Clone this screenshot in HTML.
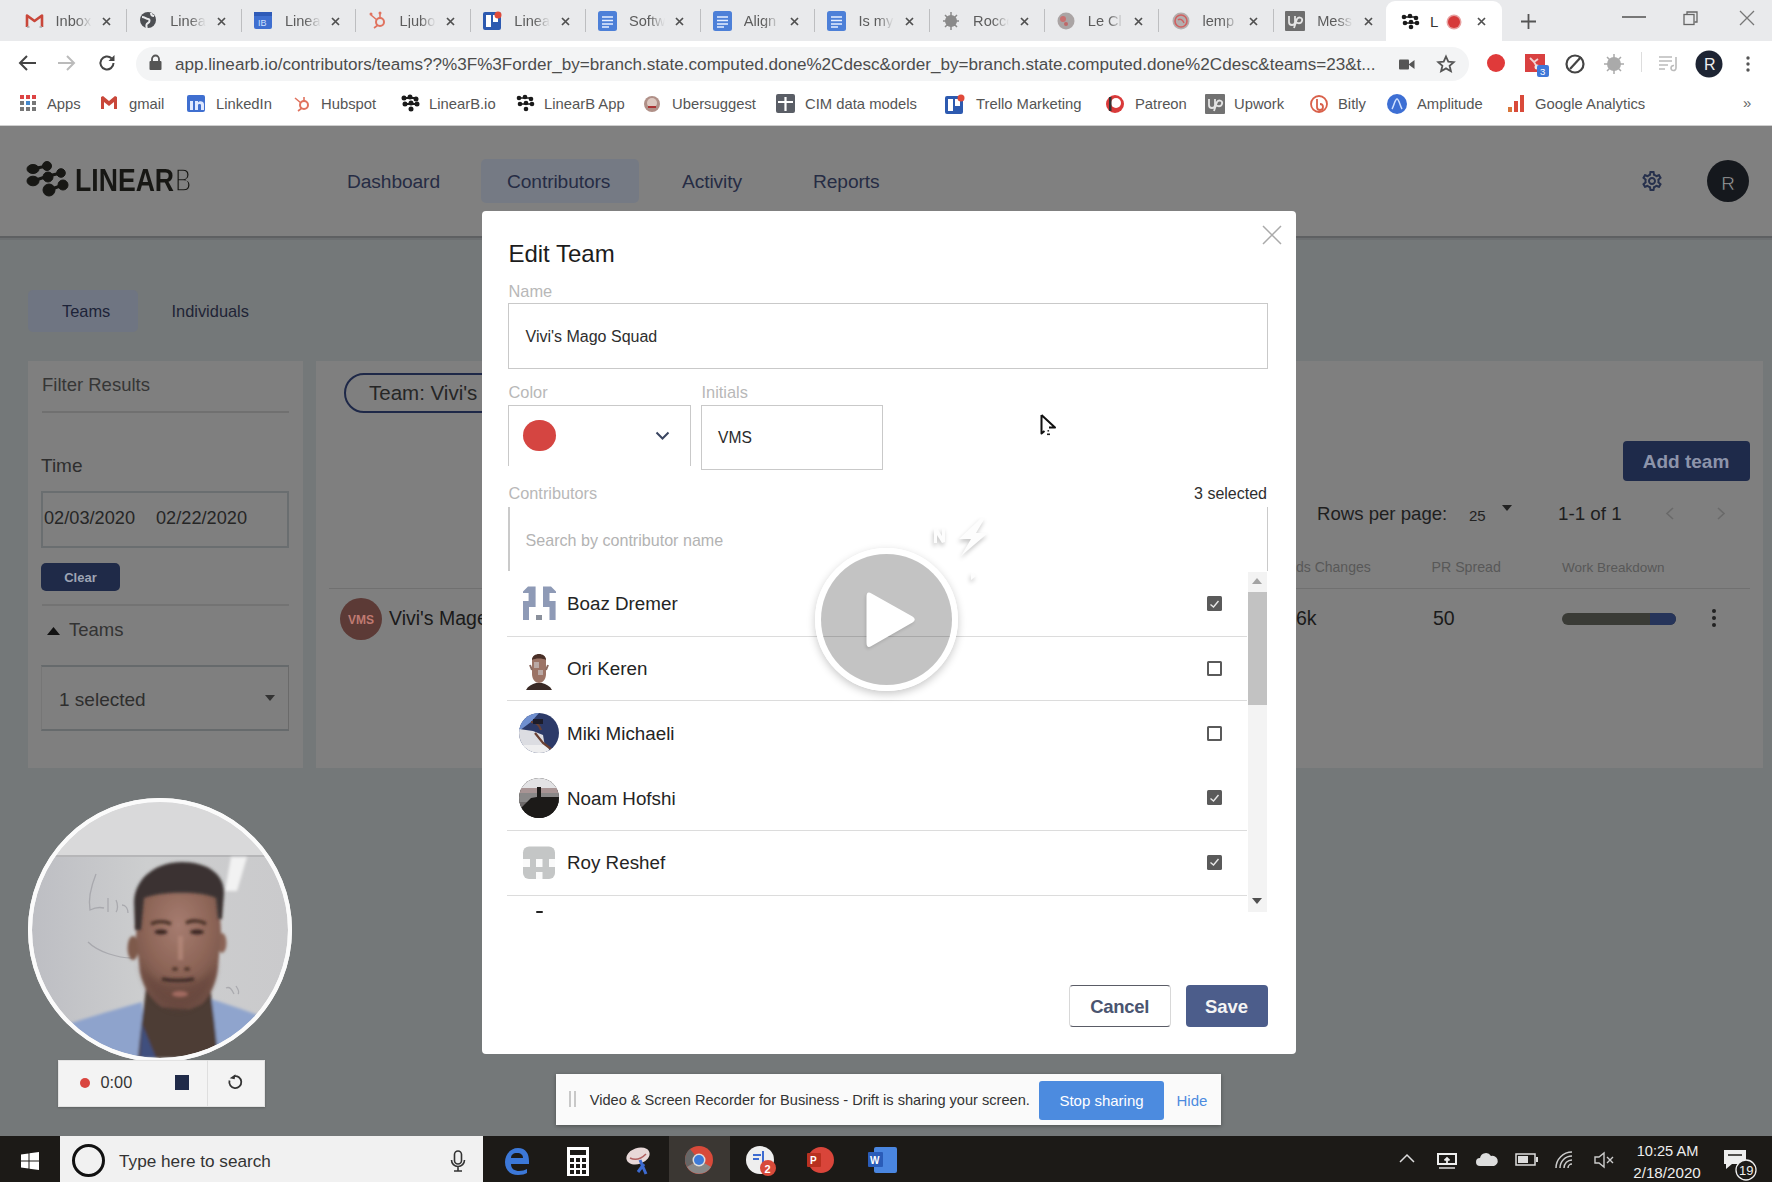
<!DOCTYPE html><html><head><meta charset="utf-8"><style>
html,body{margin:0;padding:0;width:1772px;height:1182px;overflow:hidden;background:#747879;font-family:"Liberation Sans",sans-serif;}
.a{position:absolute;box-sizing:border-box;}
.t{position:absolute;line-height:1;white-space:nowrap;}
svg{position:absolute;overflow:visible;}
</style></head><body>
<div class="a" style="left:0px;top:0px;width:1772px;height:41px;background:#e9eaec;"></div>
<div class="a" style="left:0px;top:41px;width:1772px;height:85px;background:#fff;"></div>
<svg style="left:24.5px;top:10.5px;" width="19" height="20" viewBox="0 0 19 20"><path d="M2 16V4.5L9.5 10L17 4.5V16" fill="none" stroke="#c9473a" stroke-width="2.6" stroke-linejoin="round"/><path d="M2 16h2.5M14.5 16H17" stroke="#aaa" stroke-width="1.5"/></svg>
<div class="t " style="left:55.5px;top:13.6px;font-size:14.6px;color:#5c5c5c;font-weight:400;overflow:hidden;width:36px;-webkit-mask-image:linear-gradient(90deg,#000 55%,transparent);">Inbox</div>
<svg style="left:101.9px;top:16.5px;" width="9" height="9" viewBox="0 0 9 9"><path d="M1 1L8 8M8 1L1 8" stroke="#505050" stroke-width="1.7"/></svg>
<div class="a" style="left:126px;top:9px;width:1px;height:23px;background:#bdbec0;"></div>
<svg style="left:139.2px;top:10.5px;" width="19" height="20" viewBox="0 0 19 20"><circle cx="9" cy="9" r="8" fill="#4d4f53"/><path d="M3 6c3 0 4 2 6 2s2 3 0 4-2 3-1 5M12 2c0 2 1 3 3 3" stroke="#e9eaec" stroke-width="2" fill="none"/></svg>
<div class="t " style="left:170.2px;top:13.6px;font-size:14.6px;color:#5c5c5c;font-weight:400;overflow:hidden;width:36px;-webkit-mask-image:linear-gradient(90deg,#000 55%,transparent);">Linea</div>
<svg style="left:216.6px;top:16.5px;" width="9" height="9" viewBox="0 0 9 9"><path d="M1 1L8 8M8 1L1 8" stroke="#505050" stroke-width="1.7"/></svg>
<div class="a" style="left:241px;top:9px;width:1px;height:23px;background:#bdbec0;"></div>
<svg style="left:253.9px;top:10.5px;" width="19" height="20" viewBox="0 0 19 20"><rect x="0" y="1" width="18" height="17" rx="2" fill="#3f6fd0"/><rect x="0" y="1" width="18" height="4" fill="#2f5bb8"/><text x="4" y="15" font-size="9" fill="#cfe0ff" font-family="Liberation Sans">IB</text></svg>
<div class="t " style="left:284.9px;top:13.6px;font-size:14.6px;color:#5c5c5c;font-weight:400;overflow:hidden;width:36px;-webkit-mask-image:linear-gradient(90deg,#000 55%,transparent);">Linea</div>
<svg style="left:331.3px;top:16.5px;" width="9" height="9" viewBox="0 0 9 9"><path d="M1 1L8 8M8 1L1 8" stroke="#505050" stroke-width="1.7"/></svg>
<div class="a" style="left:355px;top:9px;width:1px;height:23px;background:#bdbec0;"></div>
<svg style="left:368.6px;top:10.5px;" width="19" height="20" viewBox="0 0 19 20"><circle cx="11" cy="11" r="4" fill="none" stroke="#e0735f" stroke-width="2"/><path d="M11 7V3M8 9L2 4M9 14l-4 3" stroke="#e0735f" stroke-width="1.6"/><circle cx="11" cy="2" r="1.5" fill="#e0735f"/><circle cx="2" cy="3" r="1.5" fill="#e0735f"/></svg>
<div class="t " style="left:399.6px;top:13.6px;font-size:14.6px;color:#5c5c5c;font-weight:400;overflow:hidden;width:36px;-webkit-mask-image:linear-gradient(90deg,#000 55%,transparent);">Ljubo</div>
<svg style="left:446.0px;top:16.5px;" width="9" height="9" viewBox="0 0 9 9"><path d="M1 1L8 8M8 1L1 8" stroke="#505050" stroke-width="1.7"/></svg>
<div class="a" style="left:470px;top:9px;width:1px;height:23px;background:#bdbec0;"></div>
<svg style="left:483.3px;top:10.5px;" width="19" height="20" viewBox="0 0 19 20"><rect x="0" y="1" width="18" height="18" rx="2" fill="#2d5ab0"/><rect x="3" y="4" width="5" height="12" fill="#fff"/><rect x="10" y="4" width="5" height="7" fill="#fff"/><circle cx="15" cy="4" r="3.5" fill="#e04a3a"/></svg>
<div class="t " style="left:514.3px;top:13.6px;font-size:14.6px;color:#5c5c5c;font-weight:400;overflow:hidden;width:36px;-webkit-mask-image:linear-gradient(90deg,#000 55%,transparent);">Linea</div>
<svg style="left:560.7px;top:16.5px;" width="9" height="9" viewBox="0 0 9 9"><path d="M1 1L8 8M8 1L1 8" stroke="#505050" stroke-width="1.7"/></svg>
<div class="a" style="left:585px;top:9px;width:1px;height:23px;background:#bdbec0;"></div>
<svg style="left:598.0px;top:10.5px;" width="19" height="20" viewBox="0 0 19 20"><rect x="0" y="0" width="19" height="20" rx="2.5" fill="#4d80d8"/><path d="M4 6h11M4 9.5h11M4 13h11M4 16h7" stroke="#e8f0ff" stroke-width="1.3"/></svg>
<div class="t " style="left:629.0px;top:13.6px;font-size:14.6px;color:#5c5c5c;font-weight:400;overflow:hidden;width:36px;-webkit-mask-image:linear-gradient(90deg,#000 55%,transparent);">Softw</div>
<svg style="left:675.4px;top:16.5px;" width="9" height="9" viewBox="0 0 9 9"><path d="M1 1L8 8M8 1L1 8" stroke="#505050" stroke-width="1.7"/></svg>
<div class="a" style="left:700px;top:9px;width:1px;height:23px;background:#bdbec0;"></div>
<svg style="left:712.7px;top:10.5px;" width="19" height="20" viewBox="0 0 19 20"><rect x="0" y="0" width="19" height="20" rx="2.5" fill="#4d80d8"/><path d="M4 6h11M4 9.5h11M4 13h11M4 16h7" stroke="#e8f0ff" stroke-width="1.3"/></svg>
<div class="t " style="left:743.7px;top:13.6px;font-size:14.6px;color:#5c5c5c;font-weight:400;overflow:hidden;width:36px;-webkit-mask-image:linear-gradient(90deg,#000 55%,transparent);">Align</div>
<svg style="left:790.1px;top:16.5px;" width="9" height="9" viewBox="0 0 9 9"><path d="M1 1L8 8M8 1L1 8" stroke="#505050" stroke-width="1.7"/></svg>
<div class="a" style="left:814px;top:9px;width:1px;height:23px;background:#bdbec0;"></div>
<svg style="left:827.4px;top:10.5px;" width="19" height="20" viewBox="0 0 19 20"><rect x="0" y="0" width="19" height="20" rx="2.5" fill="#4d80d8"/><path d="M4 6h11M4 9.5h11M4 13h11M4 16h7" stroke="#e8f0ff" stroke-width="1.3"/></svg>
<div class="t " style="left:858.4px;top:13.6px;font-size:14.6px;color:#5c5c5c;font-weight:400;overflow:hidden;width:36px;-webkit-mask-image:linear-gradient(90deg,#000 55%,transparent);">Is my</div>
<svg style="left:904.8px;top:16.5px;" width="9" height="9" viewBox="0 0 9 9"><path d="M1 1L8 8M8 1L1 8" stroke="#505050" stroke-width="1.7"/></svg>
<div class="a" style="left:929px;top:9px;width:1px;height:23px;background:#bdbec0;"></div>
<svg style="left:942.1px;top:10.5px;" width="19" height="20" viewBox="0 0 19 20"><circle cx="9" cy="10" r="6" fill="#8a8a8a"/><path d="M9 1v4M9 15v4M1 10h4M13 10h4M3 4l3 3M15 4l-3 3M3 16l3-3M15 16l-3-3" stroke="#8a8a8a" stroke-width="1.5"/></svg>
<div class="t " style="left:973.1px;top:13.6px;font-size:14.6px;color:#5c5c5c;font-weight:400;overflow:hidden;width:36px;-webkit-mask-image:linear-gradient(90deg,#000 55%,transparent);">Rocco</div>
<svg style="left:1019.5px;top:16.5px;" width="9" height="9" viewBox="0 0 9 9"><path d="M1 1L8 8M8 1L1 8" stroke="#505050" stroke-width="1.7"/></svg>
<div class="a" style="left:1044px;top:9px;width:1px;height:23px;background:#bdbec0;"></div>
<svg style="left:1056.8px;top:10.5px;" width="19" height="20" viewBox="0 0 19 20"><circle cx="9" cy="10" r="8.5" fill="#aaa4a4"/><circle cx="6" cy="8" r="3" fill="#c87070"/><circle cx="9" cy="13" r="2" fill="#c06868"/></svg>
<div class="t " style="left:1087.8px;top:13.6px;font-size:14.6px;color:#5c5c5c;font-weight:400;overflow:hidden;width:36px;-webkit-mask-image:linear-gradient(90deg,#000 55%,transparent);">Le Cl</div>
<svg style="left:1134.2px;top:16.5px;" width="9" height="9" viewBox="0 0 9 9"><path d="M1 1L8 8M8 1L1 8" stroke="#505050" stroke-width="1.7"/></svg>
<div class="a" style="left:1158px;top:9px;width:1px;height:23px;background:#bdbec0;"></div>
<svg style="left:1171.5px;top:10.5px;" width="19" height="20" viewBox="0 0 19 20"><circle cx="9" cy="10" r="8.5" fill="#b4aeae"/><circle cx="9" cy="10" r="6" fill="none" stroke="#d06060" stroke-width="1.6"/><path d="M6 9c2-2 5 0 6 3" stroke="#d06060" stroke-width="1.4" fill="none"/></svg>
<div class="t " style="left:1202.5px;top:13.6px;font-size:14.6px;color:#5c5c5c;font-weight:400;overflow:hidden;width:36px;-webkit-mask-image:linear-gradient(90deg,#000 55%,transparent);">lemp</div>
<svg style="left:1248.9px;top:16.5px;" width="9" height="9" viewBox="0 0 9 9"><path d="M1 1L8 8M8 1L1 8" stroke="#505050" stroke-width="1.7"/></svg>
<div class="a" style="left:1273px;top:9px;width:1px;height:23px;background:#bdbec0;"></div>
<svg style="left:1286.2px;top:10.5px;" width="19" height="20" viewBox="0 0 19 20"><rect x="-1" y="0" width="20" height="20" rx="1" fill="#6e6e6e"/><path d="M3 5v6a3 3 0 0 0 6 0V5M9 10c2 3 6 3 7 0s-3-5-5-2l-3 9" fill="none" stroke="#e4e4e4" stroke-width="1.8"/></svg>
<div class="t " style="left:1317.2px;top:13.6px;font-size:14.6px;color:#5c5c5c;font-weight:400;overflow:hidden;width:36px;-webkit-mask-image:linear-gradient(90deg,#000 55%,transparent);">Mess</div>
<svg style="left:1363.6px;top:16.5px;" width="9" height="9" viewBox="0 0 9 9"><path d="M1 1L8 8M8 1L1 8" stroke="#505050" stroke-width="1.7"/></svg>
<div class="a" style="left:1386px;top:1px;width:116px;height:40px;background:#fff;border-radius:9px 9px 0 0;"></div>
<svg style="left:1401.0px;top:13.0px;" width="20" height="16" viewBox="0 0 20 16"><g fill="#1a1a1a"><circle cx="3" cy="4" r="2.3"/><circle cx="9" cy="3" r="2.3"/><circle cx="15" cy="5" r="2.3"/><circle cx="4" cy="10" r="2.3"/><circle cx="10" cy="9" r="2.3"/><circle cx="16" cy="10" r="2.3"/><circle cx="10" cy="14" r="2.3"/><path d="M3 4h12M4 10h12" stroke="#1a1a1a" stroke-width="1.6"/></g></svg>
<div class="t " style="left:1430px;top:14.3px;font-size:15px;color:#333;font-weight:400;">L</div>
<svg style="left:1446.0px;top:14.0px;" width="16" height="16" viewBox="0 0 16 16"><circle cx="8" cy="8" r="7.5" fill="#e8a0a0"/><circle cx="8" cy="8" r="6" fill="#d63a3a"/></svg>
<svg style="left:1476.5px;top:16.5px;" width="9" height="9" viewBox="0 0 9 9"><path d="M1 1L8 8M8 1L1 8" stroke="#505050" stroke-width="1.7"/></svg>
<svg style="left:1520.0px;top:13.0px;" width="17" height="17" viewBox="0 0 17 17"><path d="M8.5 1v15M1 8.5h15" stroke="#555" stroke-width="1.8"/></svg>
<div class="a" style="left:1622px;top:16px;width:24px;height:1.5px;background:#777;"></div>
<svg style="left:1683.0px;top:11.0px;" width="15" height="15" viewBox="0 0 15 15"><rect x="1" y="3.5" width="10" height="10" fill="none" stroke="#666" stroke-width="1.3"/><path d="M4 3.5V1h10v10h-2.5" fill="none" stroke="#666" stroke-width="1.3"/></svg>
<svg style="left:1739.0px;top:10.0px;" width="16" height="16" viewBox="0 0 16 16"><path d="M1 1L15 15M15 1L1 15" stroke="#777" stroke-width="1.3"/></svg>
<svg style="left:17.0px;top:54.0px;" width="20" height="18" viewBox="0 0 20 18"><path d="M19 9H3M10 2L3 9l7 7" fill="none" stroke="#444" stroke-width="2"/></svg>
<svg style="left:57.0px;top:54.0px;" width="20" height="18" viewBox="0 0 20 18"><path d="M1 9h16M10 2l7 7-7 7" fill="none" stroke="#bbb" stroke-width="2"/></svg>
<svg style="left:97.0px;top:53.0px;" width="20" height="20" viewBox="0 0 20 20"><path d="M16.5 10a6.5 6.5 0 1 1-2-4.7" fill="none" stroke="#444" stroke-width="2"/><path d="M17.5 2v6h-6z" fill="#444"/></svg>
<div class="a" style="left:136px;top:47px;width:1333px;height:34px;background:#f3f4f5;border-radius:17px;"></div>
<svg style="left:149.0px;top:55.0px;" width="13" height="16" viewBox="0 0 13 16"><rect x="0.5" y="6" width="12" height="9" rx="1" fill="#555"/><path d="M3 6V4a3.5 3.5 0 0 1 7 0v2" fill="none" stroke="#555" stroke-width="1.8"/></svg>
<div class="t " style="left:175px;top:55.5px;font-size:17.1px;color:#4c4c4c;font-weight:400;letter-spacing:0px;">app.linearb.io/contributors/teams??%3F%3Forder_by=branch.state.computed.done%2Cdesc&amp;order_by=branch.state.computed.done%2Cdesc&amp;teams=23&amp;t...</div>
<svg style="left:1399.0px;top:59.0px;" width="16" height="11" viewBox="0 0 16 11"><rect x="0" y="0.5" width="10" height="10" rx="1" fill="#555"/><path d="M9.5 5.5l6-4.5v9z" fill="#555"/></svg>
<svg style="left:1437.0px;top:55.0px;" width="18" height="18" viewBox="0 0 18 18"><path d="M9 1.5l2.3 5.2 5.4.5-4.1 3.6 1.3 5.4L9 13.4l-4.9 2.8 1.3-5.4L1.3 7.2l5.4-.5z" fill="none" stroke="#555" stroke-width="1.8"/></svg>
<svg style="left:1486.0px;top:53.0px;" width="20" height="20" viewBox="0 0 20 20"><circle cx="10" cy="10" r="9" fill="#e03a3a"/></svg>
<svg style="left:1524.0px;top:51.0px;" width="26" height="26" viewBox="0 0 26 26"><rect x="1" y="3" width="20" height="18" fill="#d94040"/><path d="M6 7l4 4 4-3M10 11l3 5" stroke="#f0d0d0" stroke-width="1.8" fill="none"/><circle cx="13" cy="16" r="2.5" fill="#e8e8e8"/><rect x="13" y="14" width="12" height="12" rx="2" fill="#3f78d8"/><text x="16" y="24" font-size="9.5" fill="#fff" font-family="Liberation Sans">3</text></svg>
<svg style="left:1564.0px;top:53.0px;" width="22" height="22" viewBox="0 0 22 22"><circle cx="11" cy="11" r="8.5" fill="none" stroke="#444" stroke-width="2.2"/><path d="M6 16L17 4" stroke="#444" stroke-width="2.2"/></svg>
<svg style="left:1603.0px;top:53.0px;" width="22" height="22" viewBox="0 0 22 22"><circle cx="11" cy="11" r="7" fill="#aaa"/><path d="M11 1v4M11 17v4M1 11h4M17 11h4M4 4l3 3M18 4l-3 3M4 18l3-3M18 18l-3-3" stroke="#aaa" stroke-width="1.5"/></svg>
<div class="a" style="left:1641px;top:52px;width:1px;height:20px;background:#ddd;"></div>
<svg style="left:1658.0px;top:55.0px;" width="22" height="17" viewBox="0 0 22 17"><path d="M1 2h13M1 6h13M1 10h9M1 14h6" stroke="#bbb" stroke-width="1.6"/><path d="M18 2v11a2.5 2.5 0 1 1-2-2.4" fill="none" stroke="#bbb" stroke-width="1.6"/></svg>
<svg style="left:1695.0px;top:50.0px;" width="28" height="28" viewBox="0 0 28 28"><circle cx="14" cy="14" r="13.5" fill="#1d2433"/><text x="9" y="20" font-size="16" fill="#eee" font-family="Liberation Sans">R</text></svg>
<svg style="left:1745.0px;top:55.0px;" width="6" height="18" viewBox="0 0 6 18"><circle cx="3" cy="3" r="1.7" fill="#555"/><circle cx="3" cy="9" r="1.7" fill="#555"/><circle cx="3" cy="15" r="1.7" fill="#555"/></svg>
<svg style="left:19.0px;top:94.0px;" width="20" height="20" viewBox="0 0 20 20"><g fill="#777"><rect x="1" y="1" width="4" height="4" fill="#d44"/><rect x="7" y="1" width="4" height="4" fill="#d44"/><rect x="13" y="1" width="4" height="4" fill="#d44"/><rect x="1" y="7" width="4" height="4"/><rect x="7" y="7" width="4" height="4" fill="#48c"/><rect x="13" y="7" width="4" height="4"/><rect x="1" y="13" width="4" height="4"/><rect x="7" y="13" width="4" height="4"/><rect x="13" y="13" width="4" height="4"/></g></svg>
<div class="t " style="left:47px;top:96.5px;font-size:14.8px;color:#555;font-weight:400;">Apps</div>
<svg style="left:100.0px;top:94.0px;" width="20" height="20" viewBox="0 0 20 20"><path d="M1 3v12h3V8l5 4 5-4v7h3V3l-2-1-6 5-6-5z" fill="#c9473a"/></svg>
<div class="t " style="left:129px;top:96.5px;font-size:14.8px;color:#555;font-weight:400;">gmail</div>
<svg style="left:187.0px;top:94.0px;" width="20" height="20" viewBox="0 0 20 20"><rect x="0" y="1" width="18" height="17" rx="2" fill="#3f6fd0"/><rect x="3" y="7" width="3" height="9" fill="#dfe8ff"/><path d="M8 16V7h3v1.5c1-2 6-2 6 2V16h-3v-5c0-1.5-3-1.5-3 0v5z" fill="#dfe8ff"/></svg>
<div class="t " style="left:216px;top:96.5px;font-size:14.8px;color:#555;font-weight:400;">LinkedIn</div>
<svg style="left:293.0px;top:94.0px;" width="20" height="20" viewBox="0 0 20 20"><circle cx="11" cy="11" r="4" fill="none" stroke="#e0735f" stroke-width="2"/><path d="M11 7V3M8 9L2 4M9 14l-4 3" stroke="#e0735f" stroke-width="1.6"/></svg>
<div class="t " style="left:321px;top:96.5px;font-size:14.8px;color:#555;font-weight:400;">Hubspot</div>
<svg style="left:401.0px;top:94.0px;" width="20" height="20" viewBox="0 0 20 20"><g fill="#1a1a1a"><circle cx="3" cy="4" r="2.5"/><circle cx="9" cy="3" r="2.5"/><circle cx="15" cy="5" r="2.5"/><circle cx="4" cy="10" r="2.5"/><circle cx="10" cy="9" r="2.5"/><circle cx="16" cy="10" r="2.5"/><circle cx="10" cy="15" r="2.5"/><path d="M3 4h12M4 10h12" stroke="#1a1a1a" stroke-width="1.8"/></g></svg>
<div class="t " style="left:429px;top:96.5px;font-size:14.8px;color:#555;font-weight:400;">LinearB.io</div>
<svg style="left:516.0px;top:94.0px;" width="20" height="20" viewBox="0 0 20 20"><g fill="#1a1a1a"><circle cx="3" cy="4" r="2.3"/><circle cx="9" cy="3" r="2.3"/><circle cx="15" cy="5" r="2.3"/><circle cx="4" cy="10" r="2.3"/><circle cx="10" cy="9" r="2.3"/><circle cx="16" cy="10" r="2.3"/><circle cx="10" cy="15" r="2.3"/><path d="M3 4h12M4 10h12" stroke="#1a1a1a" stroke-width="1.6"/></g></svg>
<div class="t " style="left:544px;top:96.5px;font-size:14.8px;color:#555;font-weight:400;">LinearB App</div>
<svg style="left:643.0px;top:94.0px;" width="20" height="20" viewBox="0 0 20 20"><circle cx="9" cy="10" r="8" fill="#b09088"/><circle cx="9" cy="9" r="5" fill="#dcc8c0"/><path d="M5 13h8" stroke="#a33" stroke-width="2"/></svg>
<div class="t " style="left:672px;top:96.5px;font-size:14.8px;color:#555;font-weight:400;">Ubersuggest</div>
<svg style="left:776.0px;top:94.0px;" width="20" height="20" viewBox="0 0 20 20"><rect x="0" y="0" width="19" height="19" rx="2" fill="#5a5e66"/><path d="M9.5 3v14M2 8h15" stroke="#fff" stroke-width="2.2"/></svg>
<div class="t " style="left:805px;top:96.5px;font-size:14.8px;color:#555;font-weight:400;">CIM data models</div>
<svg style="left:945.0px;top:94.0px;" width="20" height="20" viewBox="0 0 20 20"><rect x="0" y="2" width="18" height="18" rx="2" fill="#2d5ab0"/><rect x="3" y="5" width="5" height="12" fill="#fff"/><rect x="10" y="5" width="5" height="7" fill="#fff"/><circle cx="16" cy="4" r="3.5" fill="#e04a3a"/></svg>
<div class="t " style="left:976px;top:96.5px;font-size:14.8px;color:#555;font-weight:400;">Trello Marketing</div>
<svg style="left:1105.0px;top:94.0px;" width="20" height="20" viewBox="0 0 20 20"><circle cx="10" cy="10" r="9" fill="#d93a3a"/><circle cx="11" cy="9" r="5" fill="#fff"/><rect x="4" y="3" width="2.5" height="14" fill="#333"/></svg>
<div class="t " style="left:1135px;top:96.5px;font-size:14.8px;color:#555;font-weight:400;">Patreon</div>
<svg style="left:1205.0px;top:94.0px;" width="20" height="20" viewBox="0 0 20 20"><rect x="0" y="0" width="20" height="20" rx="1" fill="#727272"/><path d="M4 5v6a3 3 0 0 0 6 0V5M10 10c2 3 6 3 7 0s-3-5-5-2l-3 9" fill="none" stroke="#e4e4e4" stroke-width="1.8"/></svg>
<div class="t " style="left:1234px;top:96.5px;font-size:14.8px;color:#555;font-weight:400;">Upwork</div>
<svg style="left:1310.0px;top:94.0px;" width="20" height="20" viewBox="0 0 20 20"><circle cx="9" cy="10" r="8" fill="none" stroke="#d9604a" stroke-width="1.8"/><path d="M7 5v8a3 3 0 1 0 3-3" fill="none" stroke="#d9604a" stroke-width="1.8"/></svg>
<div class="t " style="left:1338px;top:96.5px;font-size:14.8px;color:#555;font-weight:400;">Bitly</div>
<svg style="left:1387.0px;top:94.0px;" width="20" height="20" viewBox="0 0 20 20"><circle cx="10" cy="10" r="10" fill="#3d6fd4"/><path d="M5 15c2-3 3-10 5-10s3 7 5 10" stroke="#cfe0ff" stroke-width="1.5" fill="none"/></svg>
<div class="t " style="left:1417px;top:96.5px;font-size:14.8px;color:#555;font-weight:400;">Amplitude</div>
<svg style="left:1507.0px;top:94.0px;" width="20" height="20" viewBox="0 0 20 20"><rect x="1" y="13" width="4" height="5" fill="#d9763a"/><rect x="7" y="7" width="4" height="11" fill="#d94a3a"/><rect x="13" y="1" width="4" height="17" fill="#d94a3a"/></svg>
<div class="t " style="left:1535px;top:96.5px;font-size:14.8px;color:#555;font-weight:400;">Google Analytics</div>
<div class="t " style="left:1743px;top:95.3px;font-size:15px;color:#666;font-weight:400;">»</div>
<div class="a" style="left:0px;top:125px;width:1772px;height:1px;background:#cfcfcf;"></div>
<div class="a" style="left:0px;top:126px;width:1772px;height:110px;background:#808080;"></div>
<div class="a" style="left:0px;top:236px;width:1772px;height:2px;background:#5e6062;"></div>
<div class="a" style="left:0px;top:238px;width:1772px;height:2px;background:#6c6f71;"></div>
<div class="a" style="left:0px;top:240px;width:1772px;height:895px;background:#747879;"></div>
<svg style="left:26.0px;top:160.0px;" width="46" height="40" viewBox="0 0 46 40"><g fill="#171714" stroke="#171714"><path d="M6 9L21 6M7 21L22 16L35 13M23 30L37 25" stroke-width="3" fill="none"/><ellipse cx="7" cy="9" rx="6" ry="4.5"/><circle cx="21" cy="6" r="4.5"/><ellipse cx="7" cy="21" rx="6" ry="4.8"/><circle cx="22" cy="17" r="5"/><circle cx="35" cy="13" r="4.3"/><circle cx="23" cy="30" r="6"/><circle cx="37" cy="25" r="5"/></g></svg>
<div class="t " style="left:75px;top:164.7px;font-size:30.6px;color:#171714;font-weight:700;transform:scaleX(0.87);transform-origin:0 0;">LINEAR</div>
<div class="t " style="left:175px;top:164.7px;font-size:30.6px;color:#171714;font-weight:400;transform:scaleX(0.8);transform-origin:0 0;-webkit-text-stroke:1.3px #808080;">B</div>
<div class="a" style="left:481px;top:159px;width:158px;height:44px;background:#757a84;border-radius:5px;"></div>
<div class="t " style="left:347px;top:171.7px;font-size:19.2px;color:#262c44;font-weight:400;letter-spacing:-0.1px;">Dashboard</div>
<div class="t " style="left:507px;top:171.7px;font-size:19.2px;color:#262c44;font-weight:400;letter-spacing:-0.1px;">Contributors</div>
<div class="t " style="left:682px;top:171.7px;font-size:19.2px;color:#262c44;font-weight:400;letter-spacing:-0.1px;">Activity</div>
<div class="t " style="left:813px;top:171.7px;font-size:19.2px;color:#262c44;font-weight:400;letter-spacing:-0.1px;">Reports</div>
<svg style="left:1640.0px;top:169.0px;" width="24" height="24" viewBox="0 0 24 24"><path d="M19.43 12.98c.04-.32.07-.64.07-.98 0-.34-.03-.66-.07-.98l2.11-1.65c.19-.15.24-.42.12-.64l-2-3.46c-.09-.16-.26-.25-.44-.25-.06 0-.12.01-.17.03l-2.49 1c-.52-.4-1.08-.73-1.69-.98l-.38-2.65C14.460 2.18 14.25 2 14 2h-4c-.25 0-.46.18-.49.42l-.38 2.65c-.61.25-1.17.59-1.690.98l-2.49-1c-.06-.02-.12-.03-.18-.03-.17 0-.34.09-.43.25l-2 3.46c-.13.22-.07.49.12.64l2.11 1.65c-.04.32-.07.65-.07.98 0 .33.03.66.07.98l-2.11 1.65c-.19.15-.24.42-.12.64l2 3.46c.09.16.26.25.44.25.06 0 .12-.01.17-.03l2.49-1c.52.4 1.08.73 1.69.98l.38 2.65c.03.24.24.42.49.42h4c.25 0 .46-.18.49-.42l.38-2.65c.61-.25 1.17-.59 1.69-.98l2.49 1c.06.02.12.03.18.03.17 0 .34-.09.43-.25l2-3.46c.12-.22.07-.49-.12-.64l-2.11-1.65zM17.45 11.27c.04.31.05.52.05.73 0 .21-.02.43-.05.73l-.14 1.13.89.7 1.08.84-.7 1.21-1.27-.51-1.04-.42-.9.68c-.43.32-.84.56-1.25.73l-1.06.43-.16 1.13-.2 1.35h-1.4l-.19-1.35-.16-1.13-1.06-.43c-.43-.18-.83-.41-1.23-.71l-.91-.7-1.06.43-1.27.51-.7-1.21 1.08-.84.89-.7-.14-1.130c-.03-.31-.05-.54-.05-.74s.02-.43.05-.73l.14-1.13-.89-.7-1.08-.84.7-1.21 1.27.51 1.04.42.9-.68c.43-.32.84-.56 1.25-.73l1.06-.43.16-1.13.2-1.35h1.39l.19 1.35.16 1.13 1.06.43c.43.18.83.41 1.23.71l.91.7 1.06-.43 1.27-.51.7 1.21-1.07.85-.89.7.14 1.13zM12 8c-2.21 0-4 1.79-4 4s1.790 4 4 4 4-1.79 4-4-1.79-4-4-4zm0 6c-1.1 0-2-.9-2-2s.9-2 2-2 2 .9 2 2-.9 2-2 2z" fill="#26304c"/></svg>
<div class="a" style="left:1707px;top:160px;width:42px;height:42px;border-radius:50%;background:#15181d;"></div>
<div class="t " style="left:1728px;transform:translateX(-50%);top:173.9px;font-size:19px;color:#a8a8a8;font-weight:400;-webkit-text-stroke:0.6px #15181d;">R</div>
<div class="a" style="left:28px;top:290px;width:110px;height:42px;background:#6f7582;border-radius:5px;"></div>
<div class="t " style="left:62px;top:303.1px;font-size:16.4px;color:#1d2338;font-weight:400;">Teams</div>
<div class="t " style="left:171.5px;top:303.1px;font-size:16.4px;color:#1f2436;font-weight:400;">Individuals</div>
<div class="a" style="left:28px;top:361px;width:275px;height:407px;background:#7f7f7f;"></div>
<div class="t " style="left:42px;top:376.3px;font-size:18.5px;color:#363636;font-weight:400;">Filter Results</div>
<div class="a" style="left:42px;top:411px;width:247px;height:2px;background:#707070;"></div>
<div class="t " style="left:41px;top:455.9px;font-size:19px;color:#2e2e2e;font-weight:400;">Time</div>
<div class="a" style="left:41px;top:491px;width:248px;height:57px;border:2px solid #6a6e70;"></div>
<div class="t " style="left:44px;top:509.3px;font-size:18.2px;color:#262626;font-weight:400;">02/03/2020</div>
<div class="t " style="left:156px;top:509.3px;font-size:18.2px;color:#262626;font-weight:400;">02/22/2020</div>
<div class="a" style="left:41px;top:563px;width:79px;height:28px;background:#1f2a48;border-radius:5px;"></div>
<div class="t " style="left:80.5px;transform:translateX(-50%);top:571.0px;font-size:13px;color:#9ea4b4;font-weight:700;">Clear</div>
<div class="a" style="left:42px;top:604px;width:247px;height:2px;background:#737373;"></div>
<svg style="left:47.0px;top:627.0px;" width="13" height="8" viewBox="0 0 13 8"><path d="M0 8L6.5 0L13 8z" fill="#111"/></svg>
<div class="t " style="left:69px;top:621.3px;font-size:18.5px;color:#333;font-weight:400;">Teams</div>
<div class="a" style="left:41px;top:665px;width:248px;height:66px;border:2px solid #666a6c;border-left:1px solid #767676;border-right:1px solid #6a6a6a;"></div>
<div class="t " style="left:59px;top:690.4px;font-size:19px;color:#2e2e2e;font-weight:400;">1 selected</div>
<svg style="left:265.0px;top:695.0px;" width="10" height="6" viewBox="0 0 10 6"><path d="M0 0h10L5 6z" fill="#333"/></svg>
<div class="a" style="left:316px;top:361px;width:1447px;height:407px;background:#7f7f7f;"></div>
<div class="a" style="left:344px;top:373px;width:300px;height:40px;border:2.5px solid #1e2848;border-radius:20px;"></div>
<div class="t " style="left:369px;top:382.6px;font-size:20.5px;color:#262626;font-weight:400;">Team: Vivi&#x27;s Mage Squad</div>
<div class="a" style="left:329px;top:588px;width:1421px;height:1px;background:#707070;"></div>
<div class="a" style="left:340px;top:598px;width:42px;height:42px;border-radius:50%;background:#5c3a36;"></div>
<div class="t " style="left:361px;transform:translateX(-50%);top:613.8px;font-size:12px;color:#c07a72;font-weight:700;">VMS</div>
<div class="t " style="left:389px;top:608.5px;font-size:19.5px;color:#1a1a1a;font-weight:400;">Vivi&#x27;s Mage Squad</div>
<div class="a" style="left:1623px;top:441px;width:127px;height:40px;background:#1e2a4a;border-radius:4px;"></div>
<div class="t " style="left:1686px;transform:translateX(-50%);top:451.9px;font-size:19px;color:#8d94aa;font-weight:700;">Add team</div>
<div class="t " style="left:1317px;top:504.8px;font-size:18.6px;color:#1e1e1e;font-weight:400;">Rows per page:</div>
<div class="t " style="left:1469px;top:507.8px;font-size:15px;color:#222;font-weight:400;">25</div>
<svg style="left:1502.0px;top:505.0px;" width="10" height="6" viewBox="0 0 10 6"><path d="M0 0h10L5 6z" fill="#222"/></svg>
<div class="t " style="left:1558px;top:504.6px;font-size:18.8px;color:#1e1e1e;font-weight:400;">1-1 of 1</div>
<svg style="left:1666.0px;top:507.0px;" width="8" height="13" viewBox="0 0 8 13"><path d="M7 1L1 6.5L7 12" fill="none" stroke="#6a6a6a" stroke-width="1.6"/></svg>
<svg style="left:1717.0px;top:507.0px;" width="8" height="13" viewBox="0 0 8 13"><path d="M1 1L7 6.5L1 12" fill="none" stroke="#6a6a6a" stroke-width="1.6"/></svg>
<div class="t " style="left:1296px;top:560.1px;font-size:14px;color:#585858;font-weight:400;">ds Changes</div>
<div class="t " style="left:1431.5px;top:560.0px;font-size:14.2px;color:#585858;font-weight:400;">PR Spread</div>
<div class="t " style="left:1562px;top:560.6px;font-size:13.5px;color:#585858;font-weight:400;">Work Breakdown</div>
<div class="a" style="left:1296px;top:588px;width:454px;height:1px;background:#707070;"></div>
<div class="t " style="left:1296px;top:608.5px;font-size:19.5px;color:#1a1a1a;font-weight:400;">6k</div>
<div class="t " style="left:1433px;top:608.5px;font-size:19.5px;color:#1a1a1a;font-weight:400;">50</div>
<div class="a" style="left:1562px;top:613px;width:114px;height:12px;background:#3a3b36;border-radius:6px;"></div>
<div class="a" style="left:1650px;top:613px;width:26px;height:12px;background:#26345a;border-radius:0 6px 6px 0;"></div>
<svg style="left:1711.0px;top:608.0px;" width="6" height="20" viewBox="0 0 6 20"><circle cx="3" cy="3" r="2" fill="#222"/><circle cx="3" cy="10" r="2" fill="#222"/><circle cx="3" cy="17" r="2" fill="#222"/></svg>
<div class="a" style="left:1763px;top:361px;width:9px;height:406px;background:#747879;"></div>
<div class="a" style="left:482px;top:211px;width:814px;height:843px;background:#fff;border-radius:4px;"></div>
<div class="t " style="left:508.4px;top:241.7px;font-size:24px;color:#1c1c1c;font-weight:400;">Edit Team</div>
<svg style="left:1262.0px;top:225.0px;" width="20" height="20" viewBox="0 0 20 20"><path d="M1 1L19 19M19 1L1 19" stroke="#aaaaaa" stroke-width="1.5"/></svg>
<div class="t " style="left:508.5px;top:283.1px;font-size:16.4px;color:#b8b8b8;font-weight:400;">Name</div>
<div class="a" style="left:508px;top:303px;width:760px;height:66px;border:1.5px solid #c9c9c9;"></div>
<div class="t " style="left:525.5px;top:329.2px;font-size:16px;color:#2e2e2e;font-weight:400;">Vivi&#x27;s Mago Squad</div>
<div class="t " style="left:508.5px;top:384.1px;font-size:16.4px;color:#b8b8b8;font-weight:400;">Color</div>
<div class="a" style="left:508px;top:405px;width:183px;height:61px;border:1.5px solid #c9c9c9;border-bottom:none;"></div>
<div class="a" style="left:523px;top:419.5px;width:32.5px;height:31.5px;border-radius:50%;background:#d54541;"></div>
<svg style="left:655.0px;top:431.0px;" width="15" height="9" viewBox="0 0 15 9"><path d="M1.5 1.5L7.5 7.5L13.5 1.5" fill="none" stroke="#3a4560" stroke-width="2"/></svg>
<div class="t " style="left:701.5px;top:384.1px;font-size:16.4px;color:#b8b8b8;font-weight:400;">Initials</div>
<div class="a" style="left:701px;top:405px;width:182px;height:65px;border:1.5px solid #c9c9c9;"></div>
<div class="t " style="left:718px;top:429.8px;font-size:15.6px;color:#2a2a2a;font-weight:400;">VMS</div>
<div class="t " style="left:508.5px;top:485.2px;font-size:16.3px;color:#b8b8b8;font-weight:400;">Contributors</div>
<div class="t " style="right:505px;top:485.5px;font-size:16px;color:#2e2e2e;font-weight:400;">3 selected</div>
<div class="a" style="left:508px;top:507px;width:1.5px;height:64px;background:#cacaca;"></div>
<div class="a" style="left:1266.5px;top:507px;width:1.5px;height:64px;background:#cacaca;"></div>
<div class="t " style="left:525.5px;top:531.8px;font-size:16.1px;color:#b3b3b3;font-weight:400;">Search by contributor name</div>
<div class="t " style="left:567px;top:595.2px;font-size:18.8px;color:#242424;font-weight:400;">Boaz Dremer</div>
<div class="a" style="left:1207px;top:596.0px;width:15px;height:15px;background:#5a5a5a;border-radius:1.5px;"></div>
<svg style="left:1209.0px;top:598.5px;" width="11" height="10" viewBox="0 0 11 10"><path d="M1.5 5.5L4.5 8L9.5 2" fill="none" stroke="#e8e8e8" stroke-width="1.4"/></svg>
<div class="t " style="left:567px;top:659.7px;font-size:18.8px;color:#242424;font-weight:400;">Ori Keren</div>
<div class="a" style="left:1207px;top:660.5px;width:15px;height:15px;border:2px solid #5a5a5a;border-radius:1.5px;"></div>
<div class="t " style="left:567px;top:724.7px;font-size:18.8px;color:#242424;font-weight:400;">Miki Michaeli</div>
<div class="a" style="left:1207px;top:725.5px;width:15px;height:15px;border:2px solid #5a5a5a;border-radius:1.5px;"></div>
<div class="t " style="left:567px;top:789.5px;font-size:18.8px;color:#242424;font-weight:400;">Noam Hofshi</div>
<div class="a" style="left:1207px;top:790.3px;width:15px;height:15px;background:#5a5a5a;border-radius:1.5px;"></div>
<svg style="left:1209.0px;top:792.8px;" width="11" height="10" viewBox="0 0 11 10"><path d="M1.5 5.5L4.5 8L9.5 2" fill="none" stroke="#e8e8e8" stroke-width="1.4"/></svg>
<div class="t " style="left:567px;top:853.7px;font-size:18.8px;color:#242424;font-weight:400;">Roy Reshef</div>
<div class="a" style="left:1207px;top:854.5px;width:15px;height:15px;background:#5a5a5a;border-radius:1.5px;"></div>
<svg style="left:1209.0px;top:857.0px;" width="11" height="10" viewBox="0 0 11 10"><path d="M1.5 5.5L4.5 8L9.5 2" fill="none" stroke="#e8e8e8" stroke-width="1.4"/></svg>
<div class="a" style="left:507px;top:636px;width:740px;height:1px;background:#dcdcdc;"></div>
<div class="a" style="left:507px;top:700px;width:740px;height:1px;background:#dcdcdc;"></div>
<div class="a" style="left:507px;top:830px;width:740px;height:1px;background:#dcdcdc;"></div>
<div class="a" style="left:507px;top:894.5px;width:740px;height:1px;background:#dcdcdc;"></div>
<svg style="left:519.0px;top:583.0px;" width="40" height="40" viewBox="0 0 40 40"><g fill="#8e9ab6"><path d="M4 8.5L9 3.5H16.6V24H10V37H4V18H9.6V10H4z"/><path d="M37 8.5L32 3.5H24V24H30.5V37H36.6V18H30.5V10H37z" transform=""/><rect x="17" y="32" width="6" height="5" fill="#8a909c"/></g></svg>
<svg style="left:519.0px;top:648.0px;" width="40" height="44" viewBox="0 0 40 44"><path d="M7 42c2-4 6-6 10-7h6c4 1 8 3 10 7z" fill="#3a2a26"/><path d="M13 12c0-7 14-7 14 0v14c0 6-4 9-7 9s-7-3-7-9z" fill="#9c7466"/><path d="M13 12c0-8 14-8 14 0-3-2-11-2-14 0z" fill="#4a3028"/><path d="M15 14h5v6h-5zM19 22h5v5h-5z" fill="#c8c0c0" opacity=".7"/><path d="M11 17l2 5M29 17l-2 5" stroke="#8a6a60" stroke-width="2"/></svg>
<svg style="left:519.0px;top:713.0px;" width="40" height="40" viewBox="0 0 40 40"><clipPath id="c3"><circle cx="20" cy="20" r="20"/></clipPath><g clip-path="url(#c3)"><rect width="40" height="40" fill="#2c3a68"/><path d="M0 0h20L12 9 0 18z" fill="#7090d0"/><path d="M0 16L14 18 24 22 26 34 0 34z" fill="#dcdde2"/><path d="M0 32h28l4 8H0z" fill="#eeeeef"/><path d="M12 9c4 0 8 2 10 8M16 20l8 10 8 6" stroke="#6a4032" stroke-width="2.2" fill="none"/><path d="M14 6h10v5H14z" fill="#1c1c2a"/></g></svg>
<svg style="left:519.0px;top:778.0px;" width="40" height="40" viewBox="0 0 40 40"><clipPath id="c4"><circle cx="20" cy="20" r="20"/></clipPath><g clip-path="url(#c4)"><rect width="40" height="40" fill="#1c1a18"/><rect width="40" height="11" fill="#e2e2e4"/><rect y="10" width="40" height="6" fill="#a89494"/><rect y="15" width="40" height="10" fill="#8a8888"/><path d="M0 24h12v10H0z" fill="#6e6a6a"/><path d="M0 40V32L6 26 12 20 18 19V9h4v10h18v21z" fill="#1c1a18"/></g></svg>
<svg style="left:519.0px;top:842.0px;" width="40" height="40" viewBox="0 0 40 40"><rect x="4" y="4.5" width="32" height="32.5" rx="6" fill="#c4c6c6"/><rect x="4" y="17" width="7" height="8" fill="#fafafa"/><rect x="17" y="17" width="6.5" height="8" fill="#fafafa"/><rect x="30" y="17" width="6" height="8" fill="#fafafa"/><rect x="17" y="30" width="6.5" height="7" fill="#fafafa"/></svg>
<div class="a" style="left:536px;top:910.5px;width:7px;height:2px;background:#222;border-radius:1px;"></div>
<div class="a" style="left:1248px;top:572px;width:19px;height:340px;background:#f3f3f3;"></div>
<div class="a" style="left:1248px;top:592px;width:19px;height:113px;background:#c2c2c2;"></div>
<svg style="left:1252.0px;top:578.0px;" width="10" height="6" viewBox="0 0 10 6"><path d="M0 6h10L5 0z" fill="#a3a3a3"/></svg>
<svg style="left:1252.0px;top:898.0px;" width="10" height="6" viewBox="0 0 10 6"><path d="M0 0h10L5 6z" fill="#505050"/></svg>
<div class="a" style="left:1068.5px;top:984.5px;width:102.5px;height:42px;border:1.5px solid #5a5c66;border-left-color:#d8d8d8;border-right-color:#d8d8d8;border-radius:4px;background:#fff;"></div>
<div class="t " style="left:1119.75px;transform:translateX(-50%);top:997.6px;font-size:18.5px;color:#4a5470;font-weight:700;letter-spacing:-0.3px;">Cancel</div>
<div class="a" style="left:1185.5px;top:984.5px;width:82px;height:42px;background:#4c5d8b;border-radius:4px;"></div>
<div class="t " style="left:1226.5px;transform:translateX(-50%);top:997.6px;font-size:18.5px;color:#f4f4f4;font-weight:700;">Save</div>
<div class="a" style="left:814.5px;top:547.8px;width:143.4px;height:143.4px;border-radius:50%;border:6.8px solid #fff;box-shadow:0 3px 9px rgba(0,0,0,.22), inset 0 0 0 1px rgba(255,255,255,.0);"></div>
<div class="a" style="left:821.2px;top:554px;width:130.6px;height:131px;border-radius:50%;background:rgba(0,0,0,.235);"></div>
<svg style="left:862.0px;top:588.0px;" width="58" height="64" viewBox="0 0 58 64"><path d="M9.5 5.5Q4.5 2.5 4.5 9V54.5Q4.5 61 9.5 58L50.5 34.5Q55 31.5 50.5 28.5Z" fill="#fff" style="filter:drop-shadow(-1px 2px 1.5px rgba(0,0,0,.12))"/></svg>
<svg style="left:925.0px;top:512.0px;" width="75" height="75" viewBox="0 0 75 75"><g fill="#fdfdfd" style="filter:drop-shadow(-1px 3px 2px rgba(0,0,0,.22))"><path d="M9 17l3-1 5 8v-8h3v14l-3 1-5-8v8H9z"/><path d="M56 6L34 27h12L36 44 63 21H51l9-15z"/><path d="M46 60l5 4-5 4z"/></g></svg>
<svg style="left:1039.0px;top:413.0px;" width="20" height="26" viewBox="0 0 20 26"><path d="M2.5 2V20.5L5.5 18M2.5 2L16 14.5H10" fill="#fff" stroke="#111" stroke-width="2" stroke-linejoin="round"/><rect x="8.5" y="17" width="1.6" height="1.6" fill="#333"/><rect x="8" y="20.5" width="3" height="1.6" fill="#222"/></svg>
<div class="a" style="left:28px;top:797.5px;width:264px;height:264px;border-radius:50%;background:#fafafa;overflow:hidden;">
<svg style="left:4px;top:4px" width="256" height="256" viewBox="0 0 256 256">
<defs><clipPath id="wc"><circle cx="128" cy="128" r="128"/></clipPath>
<filter id="bl1" x="-20%" y="-20%" width="140%" height="140%"><feGaussianBlur stdDeviation="1.5"/></filter>
<filter id="bl3" x="-30%" y="-30%" width="160%" height="160%"><feGaussianBlur stdDeviation="3.5"/></filter>
<linearGradient id="bgw" x1="0" y1="0" x2="1" y2="0"><stop offset="0" stop-color="#bdbec3"/><stop offset=".45" stop-color="#cdcecf"/><stop offset="1" stop-color="#cacacc"/></linearGradient>
<radialGradient id="face" cx=".5" cy=".3" r=".75"><stop offset="0" stop-color="#a67c70"/><stop offset=".5" stop-color="#8e6658"/><stop offset="1" stop-color="#6c4c42"/></radialGradient></defs>
<g clip-path="url(#wc)">
<rect width="256" height="256" fill="url(#bgw)"/>
<rect width="256" height="54" fill="#d9d9da"/>
<rect y="53" width="256" height="2" fill="#b6b6b8"/>
<path d="M199 55l16 0-10 34-12 0z" fill="#f2f2f2" filter="url(#bl1)"/>
<g stroke="#9c9ca2" stroke-width="1.3" fill="none" opacity=".7"><path d="M64 72c-6 15-8 25-6 36 4-2 10-3 14-2"/><path d="M76 96v14M84 98c2 4 2 10 0 12M90 103c4 0 6 4 6 8"/><path d="M56 140c10 10 30 16 44 16"/><path d="M194 186c4-2 6 2 8 6M204 184c2 3 4 6 2 8"/></g>
<g filter="url(#bl1)">
<path d="M0 256V238C20 226 60 214 110 200L114 256Z" fill="#8ea3cc"/>
<path d="M176 196C200 204 232 214 256 226V256H176Z" fill="#8fa4cd"/>
<path d="M114 186L178 184C180 200 184 230 186 256H106C108 230 112 204 114 186Z" fill="#4e3c36"/>
<path d="M110 222L124 256H108Z" fill="#40507e"/>
<ellipse cx="101" cy="146" rx="5.5" ry="12" fill="#7e5a4c"/>
<ellipse cx="190" cy="141" rx="4.5" ry="10" fill="#8a6456"/>
<path d="M107 92C130 86 170 86 187 92L189 130L186 166C184 182 178 194 170 202L158 207L130 205C120 198 112 188 108 170L104 134Z" fill="url(#face)"/>
</g>
<path d="M108 160C112 185 124 204 146 207C166 206 180 190 184 162C176 176 164 182 146 182C128 182 116 176 108 160Z" fill="#5e4038" opacity=".55" filter="url(#bl3)"/>
<g filter="url(#bl1)">
<path d="M103 128L102 100C103 75 125 60 150 60C175 60 193 72 192 92L190 117L186 117L184 96C170 89 130 89 112 96L109 128Z" fill="#3b3330"/>
<path d="M119 122c6-3 14-3 20 0M154 121c6-3 14-3 20 1" stroke="#4a3028" stroke-width="3.5" fill="none"/>
<ellipse cx="129" cy="130" rx="6.5" ry="2.6" fill="#3a2824"/>
<ellipse cx="165" cy="130" rx="7" ry="2.6" fill="#3a2824"/>
<path d="M148.5 134v24" stroke="#b88a7c" stroke-width="5" opacity=".7"/>
<ellipse cx="143" cy="167" rx="3" ry="1.8" fill="#4a2e28"/><ellipse cx="155" cy="167" rx="3" ry="1.8" fill="#4a2e28"/>
<path d="M130 177c10 2 22 2 32 0" stroke="#3e2a26" stroke-width="3.5" fill="none"/>
<ellipse cx="148" cy="192" rx="8" ry="3" fill="#a26a60"/>
</g>
</g></svg></div>
<div class="a" style="left:28px;top:797.5px;width:264px;height:264px;border-radius:50%;border:4px solid #fbfbfb;"></div>
<div class="a" style="left:58px;top:1059.5px;width:207px;height:47px;background:#f3f3f3;border:1px solid #e2e2e2;box-shadow:0 1px 2px rgba(0,0,0,.2);"></div>
<div class="a" style="left:80px;top:1077.5px;width:10px;height:10px;border-radius:50%;background:#d9453f;"></div>
<div class="t " style="left:100.5px;top:1074.2px;font-size:16.3px;color:#333;font-weight:400;">0:00</div>
<div class="a" style="left:174.5px;top:1075px;width:14.5px;height:14.5px;background:#1f2a48;"></div>
<div class="a" style="left:206.5px;top:1060px;width:1px;height:46px;background:#dedede;"></div>
<svg style="left:226.0px;top:1074.0px;" width="16" height="16" viewBox="0 0 16 16"><path d="M3.5 6.5A6 6 0 1 0 8 2.2" fill="none" stroke="#333" stroke-width="1.8"/><path d="M9 0v5H4z" fill="#333" transform="rotate(10 8 3)"/></svg>
<div class="a" style="left:556px;top:1073.5px;width:664.5px;height:51.5px;background:#fafafa;box-shadow:0 1px 4px rgba(0,0,0,.35);"></div>
<div class="a" style="left:569px;top:1091px;width:2px;height:16px;background:#c8c8c8;"></div>
<div class="a" style="left:574px;top:1091px;width:2px;height:16px;background:#c8c8c8;"></div>
<div class="t " style="left:589.7px;top:1093.4px;font-size:14.6px;color:#333;font-weight:400;">Video &amp; Screen Recorder for Business - Drift is sharing your screen.</div>
<div class="a" style="left:1039px;top:1080.5px;width:125px;height:39px;background:#4c8bdf;border-radius:3px;"></div>
<div class="t " style="left:1101.5px;transform:translateX(-50%);top:1092.8px;font-size:15px;color:#fff;font-weight:400;">Stop sharing</div>
<div class="t " style="left:1176.5px;top:1092.8px;font-size:15px;color:#4c8bdf;font-weight:400;">Hide</div>
<div class="a" style="left:0px;top:1136px;width:1772px;height:46px;background:#1c1a17;"></div>
<svg style="left:21.0px;top:1152.0px;" width="18" height="18" viewBox="0 0 18 18"><path d="M0 2.5L7.5 1.5V8.5H0zM8.5 1.3L18 0V8.5H8.5zM0 9.5H7.5V16.5L0 15.5zM8.5 9.5H18V18L8.5 16.7z" fill="#fff"/></svg>
<div class="a" style="left:59.5px;top:1136px;width:423.5px;height:46px;background:#f1f1f1;"></div>
<div class="a" style="left:72px;top:1144px;width:33px;height:33px;border-radius:50%;border:3.5px solid #111;"></div>
<div class="t " style="left:119px;top:1153.2px;font-size:17.2px;color:#333;font-weight:400;">Type here to search</div>
<svg style="left:450.0px;top:1150.0px;" width="16" height="22" viewBox="0 0 16 22"><rect x="4.5" y="1" width="7" height="13" rx="3.5" fill="none" stroke="#333" stroke-width="1.6"/><path d="M1.5 10a6.5 6.5 0 0 0 13 0M8 16.5V21M4 21h8" fill="none" stroke="#333" stroke-width="1.6"/></svg>
<svg style="left:503.0px;top:1146.0px;" width="28" height="28" viewBox="0 0 28 28"><path d="M25 18H8c0 5 4 7 8 7 3 0 6-1 8-2v4c-2 1-5 2-9 2-8 0-13-5-13-13 0-7 5-14 13-14 8 0 11 6 11 13v3zM8 12h12c0-3-2-5-6-5s-6 2-6 5z" fill="#3c78d8"/></svg>
<svg style="left:566.0px;top:1146.0px;" width="24" height="31" viewBox="0 0 24 31"><rect x="1" y="1" width="22" height="29" fill="#fff"/><rect x="4" y="4" width="16" height="5" fill="#1c1a17"/><g fill="#1c1a17"><rect x="4" y="12" width="4" height="4"/><rect x="10" y="12" width="4" height="4"/><rect x="16" y="12" width="4" height="4"/><rect x="4" y="18" width="4" height="4"/><rect x="10" y="18" width="4" height="4"/><rect x="16" y="18" width="4" height="4"/><rect x="4" y="24" width="4" height="4"/><rect x="10" y="24" width="4" height="4"/><rect x="16" y="24" width="4" height="4"/></g></svg>
<svg style="left:624.0px;top:1146.0px;" width="30" height="30" viewBox="0 0 30 30"><ellipse cx="14" cy="10" rx="12" ry="8" fill="#e8d8d8" transform="rotate(-20 14 10)"/><path d="M6 12c4 2 10 2 16-4" stroke="#b06060" stroke-width="1.5" fill="none"/><path d="M16 14l6 14M20 18l-6 8" stroke="#3c6ad0" stroke-width="3"/></svg>
<div class="a" style="left:669px;top:1136px;width:61px;height:46px;background:#3b3733;"></div>
<svg style="left:684.0px;top:1145.0px;" width="30" height="30" viewBox="0 0 30 30"><circle cx="15" cy="15" r="14" fill="#d84a3a"/><path d="M15 15L3 22A14 14 0 0 1 6 4z" fill="#666"/><path d="M15 15L27 22A14 14 0 0 1 3 22z" fill="#888"/><circle cx="15" cy="15" r="6.5" fill="#ddd"/><circle cx="15" cy="15" r="5" fill="#3c7ad8"/></svg>
<svg style="left:745.0px;top:1145.0px;" width="32" height="32" viewBox="0 0 32 32"><circle cx="15" cy="15" r="14" fill="#eee"/><path d="M8 10h8M8 14h6M18 6v14" stroke="#3c6ad0" stroke-width="2"/><circle cx="23" cy="23" r="8" fill="#d84a3a"/><text x="19.5" y="27.5" font-size="11" fill="#fff" font-family="Liberation Sans" font-weight="700">2</text></svg>
<svg style="left:805.0px;top:1145.0px;" width="30" height="30" viewBox="0 0 30 30"><circle cx="16" cy="15" r="13" fill="#d9453a"/><rect x="2" y="8" width="14" height="14" rx="1" fill="#b83020"/><text x="5" y="19" font-size="10" fill="#fff" font-family="Liberation Sans" font-weight="700">P</text></svg>
<svg style="left:866.0px;top:1146.0px;" width="32" height="28" viewBox="0 0 32 28"><rect x="8" y="1" width="23" height="26" rx="2" fill="#4a86e0"/><rect x="2" y="6" width="15" height="15" rx="1" fill="#2a5cb8"/><text x="4" y="18" font-size="10" fill="#fff" font-family="Liberation Sans" font-weight="700">W</text></svg>
<svg style="left:1399.0px;top:1154.0px;" width="16" height="9" viewBox="0 0 16 9"><path d="M1 8L8 1L15 8" fill="none" stroke="#ddd" stroke-width="1.5"/></svg>
<svg style="left:1436.0px;top:1152.0px;" width="22" height="17" viewBox="0 0 22 17"><rect x="1" y="1" width="20" height="12" fill="#eee"/><rect x="3" y="3" width="16" height="8" fill="#1c1a17"/><path d="M11 11V6M8.5 8.5l2.5-2.5 2.5 2.5" stroke="#eee" stroke-width="1.8" fill="none"/><path d="M3 16h16" stroke="#ddd" stroke-width="1.5"/></svg>
<svg style="left:1475.0px;top:1153.0px;" width="24" height="14" viewBox="0 0 24 14"><path d="M5 13a4 4 0 0 1 0-8 6 6 0 0 1 11-2 5 5 0 0 1 3 10z" fill="#ddd"/></svg>
<svg style="left:1515.0px;top:1153.0px;" width="24" height="13" viewBox="0 0 24 13"><rect x="1" y="1" width="19" height="11" fill="none" stroke="#ddd" stroke-width="1.5"/><rect x="3" y="3" width="10" height="7" fill="#ddd"/><rect x="21" y="4" width="2" height="5" fill="#ddd"/></svg>
<svg style="left:1554.0px;top:1150.0px;" width="22" height="20" viewBox="0 0 22 20"><path d="M2 18a16 16 0 0 1 16-16M6 18a12 12 0 0 1 12-12M10 18a8 8 0 0 1 8-8M14 18a4 4 0 0 1 4-4" fill="none" stroke="#ccc" stroke-width="1.5"/></svg>
<svg style="left:1594.0px;top:1151.0px;" width="22" height="18" viewBox="0 0 22 18"><path d="M1 6h4l5-4v14l-5-4H1z" fill="none" stroke="#ccc" stroke-width="1.4"/><path d="M13 6l6 6M19 6l-6 6" stroke="#ccc" stroke-width="1.4"/></svg>
<div class="t " style="left:1667.5px;transform:translateX(-50%);top:1143.6px;font-size:14.6px;color:#eee;font-weight:400;">10:25 AM</div>
<div class="t " style="left:1667px;transform:translateX(-50%);top:1165.1px;font-size:15.2px;color:#eee;font-weight:400;">2/18/2020</div>
<svg style="left:1722.0px;top:1148.0px;" width="40" height="36" viewBox="0 0 40 36"><path d="M2 2h22v14H10l-6 5v-5H2z" fill="#eee"/><path d="M6 7h14" stroke="#1c1a17" stroke-width="1.5"/><circle cx="24" cy="22" r="10" fill="#1c1a17" stroke="#eee" stroke-width="1.3"/><text x="17" y="27" font-size="13" fill="#eee" font-family="Liberation Sans">19</text></svg>
</body></html>
